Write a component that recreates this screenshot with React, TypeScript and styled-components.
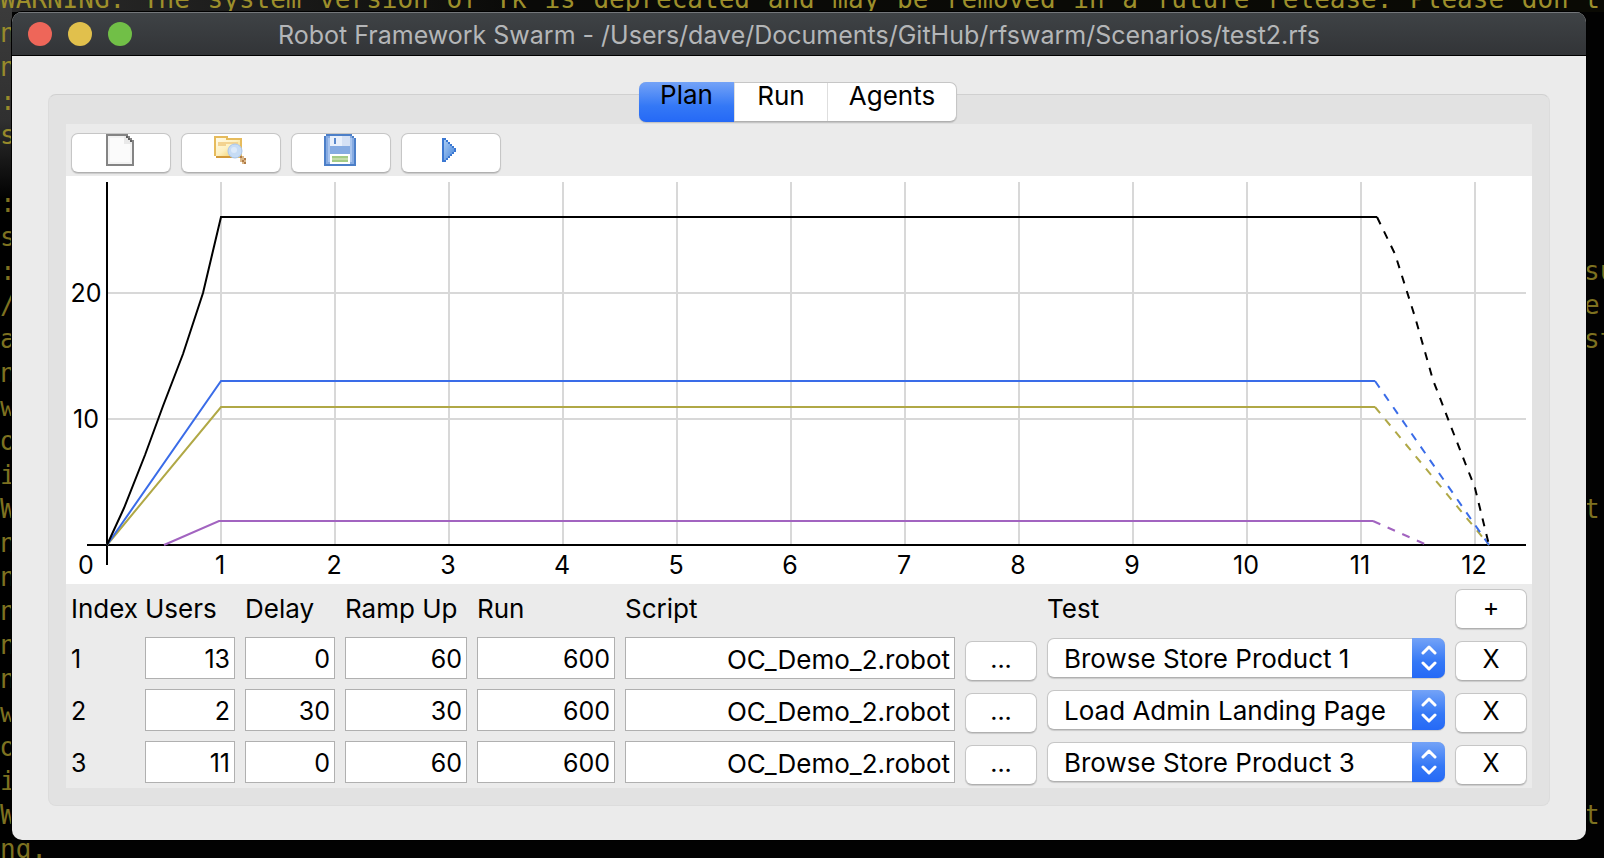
import React from "react";
import styled, { createGlobalStyle, css } from "styled-components";

const GlobalStyle = createGlobalStyle`
  *, *::before, *::after { box-sizing: border-box; }
  body { margin: 0; background: #000; }
  button, input, select { font: inherit; color: inherit; margin: 0; }
`;

const Desktop = styled.div`
  position: relative;
  min-height: 100vh;
  padding: 12px 18px 18px 12px;
  overflow: hidden;
  background: linear-gradient(#3c3c3c, #303030 120px, #000 200px) 0 0 / 12px 100% no-repeat,
    linear-gradient(90deg, #2c2c2c, #0a0a08 520px, #0a0a04) 0 0 / 100% 12px no-repeat,
    #020202;
  font-family: Inter, "Liberation Sans", sans-serif;
  font-size: 26px;
  line-height: 32px;
  color: #000;
`;

/* The terminal session lies behind the application window. */
const Terminal = styled.div`
  position: absolute;
  inset: -18px 0 0;
  overflow: hidden;
  font-family: "DejaVu Sans Mono", monospace;
  font-size: 26px;
  line-height: 34px;
  color: #7d7120;
`;

const TerminalHead = styled.div`
  height: 34px;
  color: #9d8f2b;
  white-space: nowrap;
  text-align-last: justify;
  padding-right: 4px;
`;

const TerminalLine = styled.div<{ $bright: boolean }>`
  display: flex;
  justify-content: space-between;
  height: 34px;
  white-space: pre;
  color: ${(p) => (p.$bright ? "#978a2b" : "inherit")};
`;

const LineEnd = styled.span`
  width: 20px;
`;

const Window = styled.main`
  position: relative;
  border-radius: 10px;
  background: #ebebeb;
  overflow: hidden;
  box-shadow: 0 0 0 1px #000;
`;

const TitleBar = styled.header`
  display: grid;
  grid-template-columns: 120px 1fr 120px;
  align-items: center;
  height: 44px;
  padding: 0 16px;
  background: linear-gradient(#3f4346, #323437);
  border-bottom: 1px solid #000;
  box-shadow: inset 0 1px #74777a;
`;

const Lights = styled.div`
  display: flex;
  gap: 16px;
`;

const Light = styled.button<{ $color: string }>`
  width: 24px;
  height: 24px;
  padding: 0;
  border: 0;
  border-radius: 50%;
  background: ${(p) => p.$color};
`;

const Title = styled.h1`
  margin: 0;
  padding-top: 2px;
  font-size: 25px;
  font-weight: 400;
  line-height: 32px;
  text-align: center;
  white-space: nowrap;
  color: #b4b6b8;
`;

const Content = styled.div`
  display: flex;
  flex-direction: column;
  align-items: center;
  padding: 26px 36px 34px;
`;

const raised = css`
  background: #fff;
  border: 1px solid #c6c6c6;
  border-bottom-color: #b0b0b0;
  border-radius: 7px;
  box-shadow: 0 1px 1px rgba(0, 0, 0, 0.14);
`;

const accent = css`
  background: linear-gradient(#74a3f7, #3478f6 60%, #2569f6);
`;

const Tabs = styled.div`
  ${raised}
  z-index: 1;
  display: flex;
  height: 40px;
  margin: 0 2px -28px 0;
`;

const Tab = styled.button<{ $active?: boolean; $width: number }>`
  width: ${(p) => p.$width}px;
  padding: 0 0 12px;
  border: 0;
  border-left: 1px solid #dedede;
  line-height: 24px;
  background: transparent;
  ${(p) =>
    p.$active &&
    css`
      ${accent}
      margin: -1px 0 -1px -1px;
      padding-bottom: 14px;
      border-left: 0;
      border-radius: 7px 0 0 7px;
    `}
`;

const Panel = styled.section`
  align-self: stretch;
  padding: 29px 17px 17px;
  border: 1px solid #dcdcdc;
  border-top-color: #d0d0d0;
  border-radius: 8px;
  background: #e2e2e2;
`;

const Plan = styled.div`
  background: #ebebeb;
`;

const Toolbar = styled.div`
  display: flex;
  gap: 10px;
  height: 52px;
  padding: 9px 5px 3px;
`;

const ToolButton = styled.button`
  ${raised}
  display: flex;
  justify-content: center;
  align-items: flex-start;
  width: 100px;
  height: 40px;
  padding: 0 2px 0 0;
`;

const Chart = styled.svg`
  display: block;
  width: 100%;
  height: auto;
  background: #fff;
  font-size: 25px;
`;

const Table = styled.table`
  width: 100%;
  table-layout: fixed;
  border-collapse: collapse;
`;

const HeadCell = styled.th`
  height: 48px;
  padding: 2px 5px 0;
  font-weight: 400;
  text-align: left;
  vertical-align: middle;
  white-space: nowrap;
`;

const IndexCell = styled.td`
  height: 52px;
  padding: 2px 5px 0;
  font-size: 25px;
`;

const FieldCell = styled.td`
  height: 52px;
  padding: 5px;
  vertical-align: top;
`;

const SelectCell = styled(FieldCell)`
  padding: 6px 5px;
`;

const ButtonCell = styled(FieldCell)`
  padding: 9px 5px 3px;
`;

const Field = styled.input`
  display: block;
  width: 100%;
  height: 42px;
  padding: 2px 4px 0;
  border: 1px solid #b0b0b0;
  border-radius: 0;
  background: #fff;
  text-align: right;
`;

const NumberField = styled(Field)`
  font-size: 25px;
`;

const PushButton = styled.button`
  ${raised}
  display: block;
  width: 100%;
  height: 40px;
  padding: 0 0 4px;
  font-size: 25px;
  line-height: 34px;
`;

const SelectBox = styled.div`
  ${raised}
  display: flex;
  height: 40px;
`;

const Select = styled.select`
  flex: 1;
  min-width: 0;
  appearance: none;
  padding: 2px 16px 0;
  border: 0;
  background: transparent;
`;

const Stepper = styled.span`
  ${accent}
  display: flex;
  align-items: center;
  justify-content: center;
  width: 33px;
  margin: -1px -1px -1px 0;
  border-radius: 0 7px 7px 0;
`;

const Icon = styled.svg.attrs({ width: 32, height: 32, viewBox: "0 0 32 32", "aria-hidden": true })`
  display: block;
  flex: none;
`;

const NewIcon = () => (
  <Icon shapeRendering="crispEdges">
    <path d="M2 0h22v2h2v2h2v2h2v26H2z" fill="#848484" />
    <path d="M4 2h16v6h8v22H4z" fill="#f3f3f3" />
    <path d="M6 4h14v6h6v18H6z" fill="#fbfbfb" />
    <path d="M20 2h2v2h2v2h2v2h2v2h-8z" fill="#e9e9e9" />
    <path d="M22 2h2v2h-2zM24 4h2v2h-2zM26 6h2v2h-2z" fill="#5e5e5e" />
  </Icon>
);

const OpenIcon = () => (
  <Icon shapeRendering="crispEdges">
    <defs>
      <linearGradient id="folder" x1="0" y1="0" x2="1" y2="1">
        <stop offset="0" stopColor="#fffbe8" />
        <stop offset="0.5" stopColor="#fdf0c0" />
        <stop offset="1" stopColor="#f0c850" />
      </linearGradient>
    </defs>
    <path d="M0 2h14v2h14v18h-2v2H2v-2H0z" fill="#e6bb5c" />
    <path d="M2 22h20v2H2z" fill="#d39a3a" />
    <path d="M2 4h10v2h14v16H2z" fill="url(#folder)" />
    <path d="M4 8h8v-0h12v2H12v2H4z" fill="#f3d390" />
    <g shapeRendering="auto">
      <circle cx="21" cy="17" r="7" fill="#c6dcf5" stroke="#a9c6ee" strokeWidth="1" />
      <circle cx="20" cy="16" r="3" fill="#dceafa" />
    </g>
    <path d="M26 22h4v2h2v6h-4v-2h-2z" fill="#dcb98a" />
    <path d="M26 22h2v2h-2zM30 24h2v2h-2zM28 26h2v2h-2zM30 28h2v2h-2z" fill="#b07c48" />
  </Icon>
);

const SaveIcon = () => (
  <Icon shapeRendering="crispEdges">
    <path d="M2 0h26v2h2v2h2v28H0V2h2z" fill="#4c7fc8" />
    <path d="M2 2h26v2h2v26H2z" fill="#86abe2" />
    <path d="M4 4h2v24H4zM26 4h2v24h-2z" fill="#a9c5ee" />
    <path d="M6 2h20v10H6z" fill="#e9f0fb" />
    <path d="M18 2h8v10h-8z" fill="#d5e1f5" />
    <path d="M10 4h2v6h-2z" fill="#5a88cc" />
    <path d="M6 20h20v10H6z" fill="#fff" />
    <path d="M8 22h16v6H8z" fill="#c4dca8" />
    <path d="M8 22h16v2H8zM8 26h16v2H8z" fill="#a4cb84" />
  </Icon>
);

const PlayIcon = () => (
  <Icon shapeRendering="crispEdges">
    <defs>
      <linearGradient id="play" x1="0" y1="0" x2="1" y2="1">
        <stop offset="0" stopColor="#a9cbf3" />
        <stop offset="1" stopColor="#4a88dc" />
      </linearGradient>
    </defs>
    <path
      d="M8 4h4v2h2v2h2v2h2v2h2v2h2v4h-2v2h-2v2h-2v2h-2v2h-2v2H8z"
      fill="#3b78d2"
    />
    <path d="M10 6h2v2h2v2h2v2h2v2h2v4h-2v2h-2v2h-2v2h-2v2h-2z" fill="url(#play)" />
  </Icon>
);

const tools = [
  { name: "New", Glyph: NewIcon },
  { name: "Open", Glyph: OpenIcon },
  { name: "Save", Glyph: SaveIcon },
  { name: "Play", Glyph: PlayIcon },
];

const minutes = [1, 2, 3, 4, 5, 6, 7, 8, 9, 10, 11, 12];

const series = [
  { color: "#a264c0", ramp: "98,369 153,345 1307,345", down: "1307,345 1361,369" },
  { color: "#b0a846", ramp: "41,369 155,231 1309,231", down: "1309,231 1423,369" },
  { color: "#3a6ce8", ramp: "41,369 155,205 1309,205", down: "1309,205 1423,369" },
  {
    color: "#000",
    ramp: "41,369 58,332 79,279 97,230 117,178 137,117 155,41 1311,41",
    down: "1311,41 1329,78 1349,141 1367,204 1389,261 1409,312 1423,369",
  },
];

const UsersChart = () => (
  <Chart viewBox="0 0 1466 408" role="img" aria-label="Users over time">
    <g stroke="#d8d8d8" strokeWidth="2">
      {minutes.map((m) => (
        <path key={m} d={`M${41 + m * 114} 6V368`} />
      ))}
      <path d="M42 117H1460M42 243H1460" />
    </g>
    <path d="M41 6V389M21 369H1460" stroke="#000" strokeWidth="2" />
    <g fill="none" strokeWidth="2">
      {series.map((s) => (
        <g key={s.color} stroke={s.color}>
          <polyline points={s.ramp} />
          <polyline points={s.down} strokeDasharray="8 8" />
        </g>
      ))}
    </g>
    <g textAnchor="middle">
      <text x="20" y="398">0</text>
      {minutes.map((m) => (
        <text key={m} x={40 + m * 114} y="398">{m}</text>
      ))}
      <text x="20" y="126">20</text>
      <text x="20" y="252">10</text>
    </g>
  </Chart>
);

const columns = [
  { label: "Index", width: 74 },
  { label: "Users", width: 100 },
  { label: "Delay", width: 100 },
  { label: "Ramp Up", width: 132 },
  { label: "Run", width: 148 },
  { label: "Script", width: 340 },
  { label: "", width: 82 },
  { label: "Test", width: undefined },
];

const rows = [
  { users: 13, delay: 0, ramp: 60, run: 600, script: "OC_Demo_2.robot", test: "Browse Store Product 1" },
  { users: 2, delay: 30, ramp: 30, run: 600, script: "OC_Demo_2.robot", test: "Load Admin Landing Page" },
  { users: 11, delay: 0, ramp: 60, run: 600, script: "OC_Demo_2.robot", test: "Browse Store Product 3" },
];

const terminalLines: [string, string?][] = [
  ["n"], ["n"], [":"], ["s"], [""], [":"], ["s"], [":", "su"], ["/", "er"], ["a", "st"], ["n"], ["w"],
  ["o"], ["i"], ["W", "t"], ["n"], ["n"], ["n"], ["n"], ["n"], ["w"], ["o"], ["i"], ["W", "t"], ["ng."],
];

export default function App() {
  return (
    <>
      <GlobalStyle />
      <Desktop>
        <Terminal>
          <TerminalHead>
            WARNING: The system version of Tk is deprecated and may be removed in a future release. Please don't
          </TerminalHead>
          {terminalLines.map(([start, end], i) => (
            <TerminalLine key={i} $bright={i < 4}>
              <span>{start}</span>
              {end && <LineEnd>{end}</LineEnd>}
            </TerminalLine>
          ))}
        </Terminal>
        <Window>
          <TitleBar>
            <Lights>
              <Light $color="#ee6659" aria-label="Close" />
              <Light $color="#e1c04c" aria-label="Minimise" />
              <Light $color="#71bf47" aria-label="Zoom" />
            </Lights>
            <Title>Robot Framework Swarm - /Users/dave/Documents/GitHub/rfswarm/Scenarios/test2.rfs</Title>
          </TitleBar>
          <Content>
            <Tabs role="tablist">
              <Tab role="tab" aria-selected $active $width={95}>Plan</Tab>
              <Tab role="tab" $width={93}>Run</Tab>
              <Tab role="tab" $width={129}>Agents</Tab>
            </Tabs>
            <Panel>
              <Plan>
                <Toolbar>
                  {tools.map(({ name, Glyph }) => (
                    <ToolButton key={name} aria-label={name}>
                      <Glyph />
                    </ToolButton>
                  ))}
                </Toolbar>
                <UsersChart />
                <Table>
                  <colgroup>
                    {columns.map((c, i) => (
                      <col key={i} width={c.width} />
                    ))}
                    <col width={82} />
                  </colgroup>
                  <thead>
                    <tr>
                      {columns.map((c, i) => (
                        <HeadCell key={i} scope="col">{c.label}</HeadCell>
                      ))}
                      <HeadCell>
                        <PushButton aria-label="Add row">+</PushButton>
                      </HeadCell>
                    </tr>
                  </thead>
                  <tbody>
                    {rows.map((r, i) => (
                      <tr key={i}>
                        <IndexCell>{i + 1}</IndexCell>
                        <FieldCell><NumberField aria-label="Users" defaultValue={r.users} /></FieldCell>
                        <FieldCell><NumberField aria-label="Delay" defaultValue={r.delay} /></FieldCell>
                        <FieldCell><NumberField aria-label="Ramp Up" defaultValue={r.ramp} /></FieldCell>
                        <FieldCell><NumberField aria-label="Run" defaultValue={r.run} /></FieldCell>
                        <FieldCell><Field aria-label="Script" defaultValue={r.script} /></FieldCell>
                        <ButtonCell><PushButton aria-label="Choose script">...</PushButton></ButtonCell>
                        <SelectCell>
                          <SelectBox>
                            <Select aria-label="Test" defaultValue={r.test}>
                              <option>{r.test}</option>
                            </Select>
                            <Stepper>
                              <svg width="16" height="26" viewBox="0 0 16 26" fill="none" stroke="#fff" strokeWidth="3" strokeLinecap="round" strokeLinejoin="round" aria-hidden="true">
                                <path d="M2 8l6-6 6 6M2 18l6 6 6-6" />
                              </svg>
                            </Stepper>
                          </SelectBox>
                        </SelectCell>
                        <ButtonCell><PushButton aria-label="Remove row">X</PushButton></ButtonCell>
                      </tr>
                    ))}
                  </tbody>
                </Table>
              </Plan>
            </Panel>
          </Content>
        </Window>
      </Desktop>
    </>
  );
}
